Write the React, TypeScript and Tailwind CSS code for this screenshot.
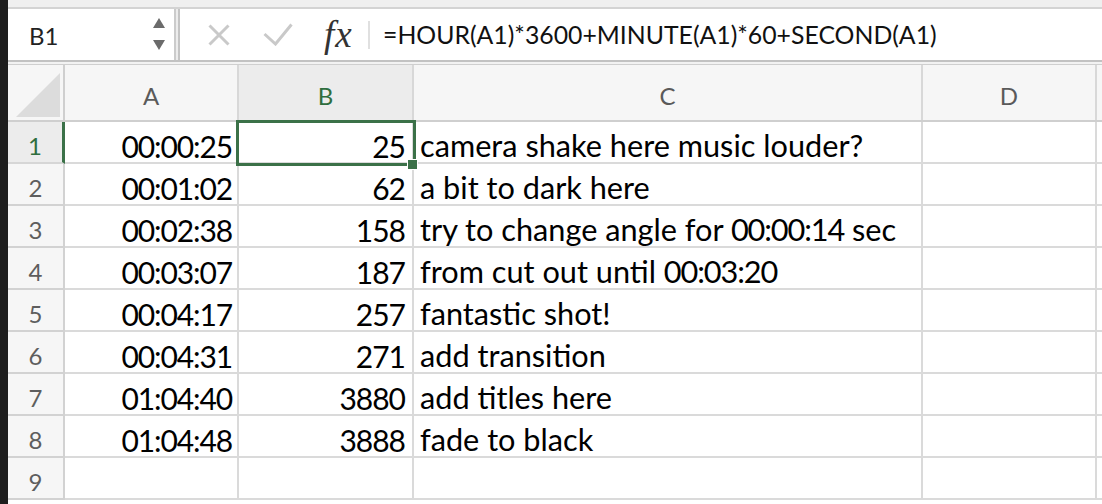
import React from "react";

const rows: [string, string, string][] = [
  ["00:00:25", "25", "camera shake here music louder?"],
  ["00:01:02", "62", "a bit to dark here"],
  ["00:02:38", "158", "try to change angle for 00:00:14 sec"],
  ["00:03:07", "187", "from cut out until 00:03:20"],
  ["00:04:17", "257", "fantastic shot!"],
  ["00:04:31", "271", "add transition"],
  ["01:04:40", "3880", "add titles here"],
  ["01:04:48", "3888", "fade to black"],
  ["", "", ""],
];

const cols = "grid grid-cols-[57px_174px_175px_509px_174px_1fr]";

function Note({ text }: { text: string }) {
  const parts = text.split(/(\d[\d:]*\d)/);
  return (
    <>
      {parts.map((p, i) =>
        i % 2 === 1 ? (
          <span key={i} className="tracking-[-1.1px]">
            {p}
          </span>
        ) : (
          <span key={i} className="whitespace-pre">
            {p}
          </span>
        )
      )}
    </>
  );
}

export default function App() {
  return (
    <div className="flex h-[504px] w-[1102px] overflow-hidden bg-white font-['Lato',sans-serif]">
      <div className="w-[8px] shrink-0 bg-[#1e1e1e]" />
      <div className="flex min-w-0 flex-1 flex-col">
        {/* toolbar */}
        <div className="h-[7px] bg-[#efefef]" />
        <div className="h-[2px] bg-[#d3d3d3]" />
        <div className="flex h-[51px] bg-[#ececec]">
          <div className="flex w-[168px] items-center justify-between border-r-2 border-[#cbcbcb] bg-white pl-[21px] pr-[9px]">
            <span className="pt-[2px] text-[24px] text-[#222]">B1</span>
            <svg width="12" height="33" viewBox="0 0 12 33">
              <polygon points="0,10 6,0 12,10" fill="#6b6b6b" />
              <polygon points="0,22 12,22 6,32" fill="#6b6b6b" />
            </svg>
          </div>
          <div className="w-[2px]" />
          <div className="flex flex-1 items-center border-l-2 border-[#c4c4c4] bg-white">
            <svg className="ml-[28px]" width="22" height="22" viewBox="0 0 22 22">
              <path d="M1.5 1.5 L20.5 20.5 M20.5 1.5 L1.5 20.5" stroke="#c9c9c9" strokeWidth="3" fill="none" />
            </svg>
            <svg className="ml-[33px]" width="30" height="23" viewBox="0 0 30 23">
              <path d="M1.5 11 L12.5 21 L28.5 1.5" stroke="#c9c9c9" strokeWidth="3" fill="none" />
            </svg>
            <span className="ml-[31px] w-[33px] font-['Liberation_Serif',serif] text-[37px] italic leading-none tracking-[1px] text-[#333]">
              fx
            </span>
            <div className="ml-[11px] h-[28px] w-[2px] bg-[#e0e0e0]" />
            <span className="ml-[13px] text-[24.8px] text-[#111]">
              =HOUR(A1)*3600+MINUTE(A1)*60+SECOND(A1)
            </span>
          </div>
        </div>
        <div className="h-[2px] bg-[#c2c2c2]" />
        <div className="h-[2px] bg-[#f2f2f2]" />
        <div className="h-[1px] bg-[#cfcfcf]" />

        {/* column headers */}
        <div className={`${cols} h-[57px] border-b-2 border-[#cfcfcf] bg-[#f6f6f6] text-[24px] text-[#5a5a5a]`}>
          <div className="relative border-r-2 border-[#cfcfcf]">
            <svg className="absolute left-0 top-0" width="55" height="55" viewBox="0 0 55 55">
              <polygon points="52,8 52,52 8,52" fill="#dcdcdc" />
            </svg>
          </div>
          <div className="flex items-center justify-center border-r-2 border-[#d8d8d8] pt-[6px]">A</div>
          <div className="flex items-center justify-center border-r-2 border-[#d8d8d8] bg-[#ececec] pt-[6px] text-[#2f6e3e]">B</div>
          <div className="flex items-center justify-center border-r-2 border-[#d8d8d8] pt-[6px]">C</div>
          <div className="flex items-center justify-center border-r-2 border-[#d8d8d8] pt-[6px]">D</div>
          <div />
        </div>

        {/* rows */}
        {rows.map((r, i) => {
          const sel = i === 0;
          return (
            <div key={i} className={`${cols} h-[42px] shrink-0 text-black`}>
              <div
                className={`flex items-center justify-center border-b-2 pt-[8px] text-[24px] leading-none ${
                  sel
                    ? "border-r-[3px] border-b-[#d6d6d6] border-r-[#3b7148] bg-[#ececec] text-[#2f6e3e]"
                    : "border-r-2 border-[#d2d2d2] bg-[#f6f6f6] text-[#5e5e5e]"
                }`}
              >
                {i + 1}
              </div>
              <div className="flex items-center justify-end border-r-2 border-b-2 border-[#dadada] pr-[5px] pt-[8px] text-[30px] leading-none tracking-[-1.1px]">
                {r[0]}
              </div>
              <div className="relative flex items-center justify-end border-r-2 border-b-2 border-[#dadada] pr-[7px] pt-[8px] text-[30px] leading-none tracking-[-1px]">
                {r[1]}
                {sel && (
                  <>
                    <div className="absolute left-[-3px] top-[-2px] z-10 h-[46px] w-[180px] border-[3px] border-[#3b7148]" />
                    <div className="absolute left-[168px] top-[37px] z-20 h-[11px] w-[11px] border border-white bg-[#3b7148]" />
                  </>
                )}
              </div>
              <div className="flex items-center border-r-2 border-b-2 border-[#dadada] pl-[6px] pt-[8px] text-[30.7px] leading-none whitespace-nowrap">
                <Note text={r[2]} />
              </div>
              <div className="border-r-2 border-b-2 border-[#dadada]" />
              <div className="border-b-2 border-[#dadada]" />
            </div>
          );
        })}
      </div>
    </div>
  );
}
